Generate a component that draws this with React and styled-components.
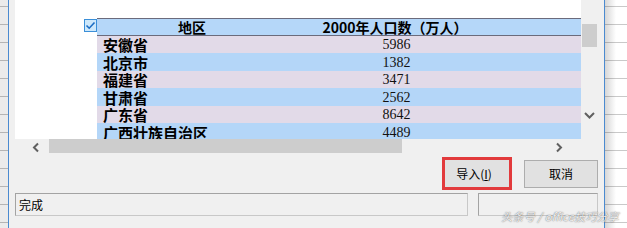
import React from "react";
import styled, { createGlobalStyle } from "styled-components";

const Global = createGlobalStyle`
  html, body { margin: 0; padding: 0; background: #f4f4f4; }
  body { font-family: "Noto Sans CJK SC", "Noto Sans", sans-serif; }
`;

const Screen = styled.div`
  position: relative;
  width: 627px;
  height: 228px;
  overflow: hidden;
  display: flex;
  align-items: flex-start;
  background: #f6f6f6;
`;

const SheetLeft = styled.div`
  width: 8px;
  height: 228px;
  flex: none;
  background:
    repeating-linear-gradient(to bottom, transparent 0 5px, #b4b4b4 5px 6px, transparent 6px 18px),
    #ebebeb;
  background-position: 0 1px;
`;

const SheetRight = styled.div`
  width: 22px;
  height: 228px;
  flex: none;
  background:
    linear-gradient(to right, rgba(0,0,0,0.16), rgba(0,0,0,0) 11px),
    repeating-linear-gradient(to bottom, transparent 0 6px, #c9c9c9 6px 7px, transparent 7px 18px),
    #ffffff;
`;

const Dialog = styled.div`
  width: 595px;
  height: 225px;
  flex: none;
  border: 1px solid #4a8ad0;
  border-top: none;
  background: #f0f0f0;
  padding: 0 5px 9px 6px;
  box-sizing: content-box;
  width: 584px;
  display: flex;
  flex-direction: column;
`;

const Preview = styled.div`
  height: 156px;
  display: grid;
  grid-template-columns: 566px 17px;
  grid-template-rows: 139px 17px;
`;

const Viewport = styled.div`
  background: #ffffff;
  overflow: hidden;
  padding: 18px 0 0 69px;
  box-sizing: border-box;
`;

const Table = styled.div`
  width: 640px;
  display: flex;
  flex-direction: column;
`;

const HeadRow = styled.div`
  display: flex;
  height: 18px;
`;

const Gutter = styled.div`
  width: 13px;
  flex: none;
  display: flex;
  align-items: flex-start;
  padding-top: 1px;
  box-sizing: border-box;
`;

const HeadCells = styled.div`
  flex: 1;
  display: grid;
  grid-template-columns: 190px 216px 1fr;
  background: #b5d7f9;
  border-top: 1px solid #6b6b7c;
  border-bottom: 1px solid #6b6b7c;
  box-sizing: border-box;
`;

const HeadCell = styled.div`
  font-family: "Noto Sans CJK SC", sans-serif;
  font-weight: 700;
  font-size: 14px;
  line-height: 16px;
  text-align: center;
  color: #000;
  white-space: nowrap;
`;

const DataRow = styled.div`
  display: flex;
  height: ${(p) => (p.$odd ? 17 : 18)}px;
`;

const DataCells = styled.div`
  flex: 1;
  display: grid;
  grid-template-columns: 190px 216px 1fr;
  align-items: center;
  background: ${(p) => (p.$odd ? "#e2dae8" : "#b4d6f8")};
`;

const NameCell = styled.div`
  font-family: "Noto Sans CJK SC", sans-serif;
  font-weight: 700;
  font-size: 15px;
  line-height: 17px;
  padding-left: 6px;
  color: #000;
  white-space: nowrap;
`;

const NumCell = styled.div`
  font-family: "Liberation Serif", serif;
  font-size: 14px;
  line-height: 17px;
  text-align: center;
  padding-left: 3px;
  color: #111;
`;

const VScroll = styled.div`
  background: #f0f0f0;
  display: flex;
  flex-direction: column;
  align-items: center;
  padding-top: 24px;
  padding-bottom: 15px;
  box-sizing: border-box;
`;

const VThumb = styled.div`
  width: 15px;
  height: 23px;
  background: #cdcdcd;
`;

const Spacer = styled.div`
  flex: 1;
`;

const ArrowBox = styled.div`
  width: 17px;
  height: 17px;
  flex: none;
  display: flex;
  align-items: center;
  justify-content: center;
`;

const HScroll = styled.div`
  background: #f0f0f0;
  display: flex;
  align-items: flex-start;
  padding: 0 13px;
`;

const HThumb = styled.div`
  width: 353px;
  height: 14px;
  margin-left: 4px;
  background: #cdcdcd;
`;

const Corner = styled.div`
  background: #f0f0f0;
`;

const ButtonRow = styled.div`
  margin-top: 1px;
  height: 33px;
  display: flex;
  justify-content: flex-end;
  align-items: center;
  gap: 12px;
  padding-right: 1px;
`;

const Button = styled.button`
  width: ${(p) => p.$w}px;
  height: ${(p) => p.$h}px;
  box-sizing: border-box;
  background: #e1e1e1;
  border: ${(p) => (p.$highlight ? "3px solid #e23a3c" : "1px solid #adadad")};
  font-family: "Noto Sans CJK SC", sans-serif;
  font-size: 12px;
  color: #000;
  padding: 0;
  margin: 0;
  display: flex;
  align-items: center;
  justify-content: center;
  padding-right: ${(p) => (p.$highlight ? 6 : 0)}px;
  u { text-decoration: underline; }
`;

const StatusRow = styled.div`
  margin-top: 3px;
  height: 23px;
  display: flex;
  gap: 10px;
`;

const StatusBox = styled.div`
  width: ${(p) => p.$w}px;
  height: 23px;
  box-sizing: border-box;
  border: 1px solid #a3a3a3;
  border-right-color: #c8c8c8;
  border-bottom-color: #c8c8c8;
  background: #f0f0f0;
  font-family: "Noto Sans CJK SC", sans-serif;
  font-size: 12px;
  line-height: 21px;
  padding-left: 3px;
  color: #000;
`;

const Watermark = styled.div`
  position: absolute;
  right: 8px;
  bottom: 4px;
  font-family: "Noto Sans CJK SC", sans-serif;
  font-size: 11px;
  font-style: italic;
  color: rgba(255, 255, 255, 0.9);
  text-shadow: 0 0 1px rgba(0, 0, 0, 0.55), 0 0 2px rgba(0, 0, 0, 0.25);
  letter-spacing: 0.2px;
  white-space: nowrap;
`;

const Check = () => (
  <svg width="13" height="13" viewBox="0 0 13 13">
    <rect x="0.5" y="0.5" width="12" height="12" fill="#cde8fb" stroke="#3b8fd8" />
    <path d="M2.5 6.5 L5.2 9.2 L10.5 3.5" fill="none" stroke="#1b6cc4" strokeWidth="1.6" />
  </svg>
);

const Chevron = ({ dir }) => {
  const paths = {
    left: "M7 1.5 L3 5.5 L7 9.5",
    right: "M3 1.5 L7 5.5 L3 9.5",
    down: "M1 3 L5.5 7.5 L10 3",
  };
  return (
    <svg width="11" height="11" viewBox="0 0 11 11">
      <path d={paths[dir]} fill="none" stroke="#606060" strokeWidth="2" />
    </svg>
  );
};

const rows = [
  ["安徽省", "5986"],
  ["北京市", "1382"],
  ["福建省", "3471"],
  ["甘肃省", "2562"],
  ["广东省", "8642"],
  ["广西壮族自治区", "4489"],
];

export default function App() {
  return (
    <>
      <Global />
      <Screen>
        <SheetLeft />
        <Dialog>
          <Preview>
            <Viewport>
              <Table>
                <HeadRow>
                  <Gutter>
                    <Check />
                  </Gutter>
                  <HeadCells>
                    <HeadCell>地区</HeadCell>
                    <HeadCell>2000年人口数（万人）</HeadCell>
                    <HeadCell />
                  </HeadCells>
                </HeadRow>
                {rows.map(([name, num], i) => (
                  <DataRow key={name} $odd={i % 2 === 0}>
                    <Gutter />
                    <DataCells $odd={i % 2 === 0}>
                      <NameCell>{name}</NameCell>
                      <NumCell>{num}</NumCell>
                      <div />
                    </DataCells>
                  </DataRow>
                ))}
              </Table>
            </Viewport>
            <VScroll>
              <VThumb />
              <Spacer />
              <ArrowBox>
                <Chevron dir="down" />
              </ArrowBox>
            </VScroll>
            <HScroll>
              <ArrowBox>
                <Chevron dir="left" />
              </ArrowBox>
              <HThumb />
              <Spacer />
              <ArrowBox>
                <Chevron dir="right" />
              </ArrowBox>
            </HScroll>
            <Corner />
          </Preview>
          <ButtonRow>
            <Button $w={70} $h={33} $highlight>
              导入(<u>I</u>)
            </Button>
            <Button $w={74} $h={28}>取消</Button>
          </ButtonRow>
          <StatusRow>
            <StatusBox $w={453}>完成</StatusBox>
            <StatusBox $w={120} />
          </StatusRow>
        </Dialog>
        <SheetRight />
        <Watermark>头条号 / office技巧分享</Watermark>
      </Screen>
    </>
  );
}
